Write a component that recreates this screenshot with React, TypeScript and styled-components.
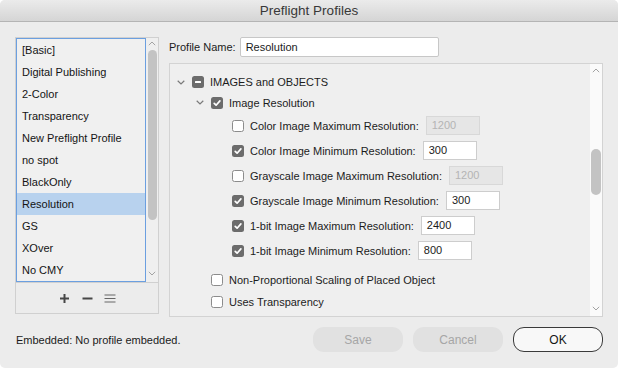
import React from "react";
import styled, { createGlobalStyle } from "styled-components";

const GlobalStyle = createGlobalStyle`
  html, body {
    margin: 0;
    padding: 0;
    background: #ffffff;
  }
  body {
    font-family: "Liberation Sans", Arial, sans-serif;
    font-size: 11px;
    color: #1b1b1b;
  }
  * {
    box-sizing: border-box;
  }
`;

const profiles = [
  "[Basic]",
  "Digital Publishing",
  "2-Color",
  "Transparency",
  "New Preflight Profile",
  "no spot",
  "BlackOnly",
  "Resolution",
  "GS",
  "XOver",
  "No CMY",
];

const resolutionRows = [
  { label: "Color Image Maximum Resolution:", checked: false, value: "1200" },
  { label: "Color Image Minimum Resolution:", checked: true, value: "300" },
  { label: "Grayscale Image Maximum Resolution:", checked: false, value: "1200" },
  { label: "Grayscale Image Minimum Resolution:", checked: true, value: "300" },
  { label: "1-bit Image Maximum Resolution:", checked: true, value: "2400" },
  { label: "1-bit Image Minimum Resolution:", checked: true, value: "800" },
];

type CheckState = "on" | "off" | "mixed";

const CheckBox: React.FC<{ state: CheckState }> = ({ state }) => (
  <Check $state={state}>
    {state === "on" && (
      <svg width="12" height="12" viewBox="0 0 12 12">
        <path
          d="M3.2 6.3 L5.1 8.2 L8.9 3.9"
          fill="none"
          stroke="#ffffff"
          strokeWidth="1.7"
          strokeLinecap="round"
          strokeLinejoin="round"
        />
      </svg>
    )}
    {state === "mixed" && (
      <svg width="12" height="12" viewBox="0 0 12 12">
        <rect x="3" y="5" width="6" height="2" rx="0.6" fill="#ffffff" />
      </svg>
    )}
  </Check>
);

const Disclosure: React.FC = () => (
  <ChevronBox>
    <svg width="8" height="5" viewBox="0 0 8 5">
      <path d="M0.7 0.8 L4 4 L7.3 0.8" fill="none" stroke="#7a7a7a" strokeWidth="1.2" />
    </svg>
  </ChevronBox>
);

const ScrollArrow: React.FC<{ down?: boolean }> = ({ down }) => (
  <svg width="8" height="5" viewBox="0 0 8 5">
    <path
      d={down ? "M0.8 0.8 L4 4 L7.2 0.8" : "M0.8 4.2 L4 1 L7.2 4.2"}
      fill="none"
      stroke="#a3a3a3"
      strokeWidth="1"
    />
  </svg>
);

const Scroller: React.FC<{
  thumbTop: number;
  thumbHeight: number;
  thumbWidth: number;
  arrowBox: number;
  bottomPad: number;
  light?: boolean;
}> = ({ thumbTop, thumbHeight, thumbWidth, arrowBox, bottomPad, light }) => (
  <Track $light={light}>
    <ArrowBox $h={arrowBox}>
      <ScrollArrow />
    </ArrowBox>
    <Thumb $top={thumbTop} $h={thumbHeight} $w={thumbWidth} />
    <TrackSpacer />
    <ArrowBox $h={arrowBox} style={{ marginBottom: bottomPad }}>
      <ScrollArrow down />
    </ArrowBox>
  </Track>
);

export default function App() {
  return (
    <>
      <GlobalStyle />
      <Window>
        <TitleBar>Preflight Profiles</TitleBar>
        <Body>
          <ListFrame>
            <ListRow>
              <ProfileList>
                {profiles.map((p) => (
                  <ProfileItem key={p} $selected={p === "Resolution"}>
                    {p}
                  </ProfileItem>
                ))}
              </ProfileList>
              <Scroller thumbTop={2} thumbHeight={170} thumbWidth={9} arrowBox={10} bottomPad={4} />
            </ListRow>
            <ListToolbar>
              <ToolIcon>
                <svg width="11" height="11" viewBox="0 0 11 11">
                  <path d="M5.5 1 V10 M1 5.5 H10" stroke="#474747" strokeWidth="2" />
                </svg>
              </ToolIcon>
              <ToolIcon>
                <svg width="11" height="11" viewBox="0 0 11 11">
                  <path d="M0.5 5.5 H10.5" stroke="#474747" strokeWidth="2" />
                </svg>
              </ToolIcon>
              <ToolIcon>
                <svg width="12" height="9" viewBox="0 0 12 9">
                  <path d="M0.5 1 H11.5 M0.5 4.5 H11.5 M0.5 8 H11.5" stroke="#666666" strokeWidth="1" />
                </svg>
              </ToolIcon>
            </ListToolbar>
          </ListFrame>

          <RightColumn>
            <NameRow>
              <span>Profile Name:</span>
              <NameInput readOnly value="Resolution" />
            </NameRow>
            <Panel>
              <Tree>
                <TreeRow $indent={4} $h={20}>
                  <Disclosure />
                  <CheckBox state="mixed" />
                  <RowLabel>IMAGES and OBJECTS</RowLabel>
                </TreeRow>
                <TreeRow $indent={23} $h={21}>
                  <Disclosure />
                  <CheckBox state="on" />
                  <RowLabel>Image Resolution</RowLabel>
                </TreeRow>
                {resolutionRows.map((r) => (
                  <TreeRow key={r.label} $indent={62} $h={25}>
                    <CheckBox state={r.checked ? "on" : "off"} />
                    <RowLabel>{r.label}</RowLabel>
                    <ValueBox $disabled={!r.checked}>{r.value}</ValueBox>
                  </TreeRow>
                ))}
                <TreeRow $indent={41} $h={22} $gap={6}>
                  <CheckBox state="off" />
                  <RowLabel>Non-Proportional Scaling of Placed Object</RowLabel>
                </TreeRow>
                <TreeRow $indent={41} $h={22}>
                  <CheckBox state="off" />
                  <RowLabel>Uses Transparency</RowLabel>
                </TreeRow>
              </Tree>
              <Scroller thumbTop={73} thumbHeight={46} thumbWidth={10} arrowBox={12} bottomPad={2} light />
            </Panel>
          </RightColumn>
        </Body>
        <Footer>
          <FooterNote>Embedded: No profile embedded.</FooterNote>
          <Buttons>
            <DialogButton $variant="disabled">Save</DialogButton>
            <DialogButton $variant="disabled">Cancel</DialogButton>
            <DialogButton $variant="default">OK</DialogButton>
          </Buttons>
        </Footer>
      </Window>
    </>
  );
}

const Window = styled.div`
  width: 618px;
  height: 368px;
  background: #ececec;
  border-radius: 5px;
  overflow: hidden;
  display: flex;
  flex-direction: column;
`;

const TitleBar = styled.div`
  height: 22px;
  flex-shrink: 0;
  display: flex;
  align-items: center;
  justify-content: center;
  background: linear-gradient(#ebebeb, #d5d5d5);
  border-bottom: 1px solid #b4b4b4;
  font-size: 13.5px;
  color: #383838;
`;

const Body = styled.div`
  display: grid;
  grid-template-columns: 144px 434px;
  column-gap: 10px;
  padding: 15px 15px 0;
`;

const ListFrame = styled.div`
  height: 277px;
  border: 1px solid #d0d0d0;
  display: flex;
  flex-direction: column;
`;

const ListRow = styled.div`
  display: flex;
  height: 244px;
`;

const ProfileList = styled.div`
  width: 130px;
  border: 1px solid #6b9fe0;
  background: #f0f0f0;
`;

const ProfileItem = styled.div<{ $selected?: boolean }>`
  height: 22px;
  line-height: 22px;
  padding-left: 5px;
  color: #141414;
  background: ${(p) => (p.$selected ? "#b8d2ee" : "transparent")};
  white-space: nowrap;
`;

const Track = styled.div<{ $light?: boolean }>`
  width: 12px;
  display: flex;
  flex-direction: column;
  align-items: center;
  background: ${(p) => (p.$light ? "#fafafa" : "#efefef")};
`;

const ArrowBox = styled.div<{ $h: number }>`
  height: ${(p) => p.$h}px;
  display: flex;
  align-items: center;
  justify-content: center;
`;

const Thumb = styled.div<{ $top: number; $h: number; $w: number }>`
  margin-top: ${(p) => p.$top}px;
  height: ${(p) => p.$h}px;
  width: ${(p) => p.$w}px;
  border-radius: 5px;
  background: #c3c3c3;
`;

const TrackSpacer = styled.div`
  flex: 1;
`;

const ListToolbar = styled.div`
  flex: 1;
  border-top: 1px solid #d0d0d0;
  display: flex;
  align-items: center;
  justify-content: center;
  gap: 7px;
`;

const ToolIcon = styled.div`
  width: 16px;
  height: 16px;
  display: flex;
  align-items: center;
  justify-content: center;
`;

const RightColumn = styled.div`
  display: flex;
  flex-direction: column;
`;

const NameRow = styled.div`
  display: flex;
  align-items: center;
  gap: 4px;
  height: 20px;
  margin-bottom: 6px;
`;

const NameInput = styled.input`
  width: 199px;
  height: 20px;
  border: 1px solid #c7c7c7;
  border-radius: 2px;
  background: #ffffff;
  padding: 0 5px;
  font-family: inherit;
  font-size: 11px;
  color: #1b1b1b;
  outline: none;
`;

const Panel = styled.div`
  height: 254px;
  border: 1px solid #d3d3d3;
  background: #efefef;
  display: flex;
`;

const Tree = styled.div`
  flex: 1;
  padding-top: 8px;
  display: flex;
  flex-direction: column;
`;

const TreeRow = styled.div<{ $indent: number; $h: number; $gap?: number }>`
  display: flex;
  align-items: center;
  height: ${(p) => p.$h}px;
  padding-left: ${(p) => p.$indent}px;
  margin-top: ${(p) => p.$gap ?? 0}px;
`;

const ChevronBox = styled.div`
  width: 14px;
  margin-right: 4px;
  display: flex;
  align-items: center;
  justify-content: center;
`;

const Check = styled.div<{ $state: CheckState }>`
  width: 12px;
  height: 12px;
  border-radius: 2.5px;
  flex-shrink: 0;
  display: flex;
  align-items: center;
  justify-content: center;
  background: ${(p) => (p.$state === "off" ? "#ffffff" : "#6c6c6c")};
  border: ${(p) => (p.$state === "off" ? "1px solid #8c8c8c" : "none")};
`;

const RowLabel = styled.span`
  margin-left: 6px;
  white-space: nowrap;
  color: #1c1c1c;
`;

const ValueBox = styled.div<{ $disabled?: boolean }>`
  margin-left: 7px;
  width: 54px;
  height: 19px;
  line-height: 17px;
  padding: 0 5px;
  border: 1px solid ${(p) => (p.$disabled ? "#d8d8d8" : "#cdcdcd")};
  background: ${(p) => (p.$disabled ? "#e6e6e6" : "#ffffff")};
  color: ${(p) => (p.$disabled ? "#b4b4b4" : "#1b1b1b")};
`;

const Footer = styled.div`
  display: flex;
  align-items: center;
  height: 25px;
  margin-top: 10px;
  padding: 0 15px 0 16px;
`;

const FooterNote = styled.div`
  flex: 1;
  color: #1b1b1b;
`;

const Buttons = styled.div`
  display: flex;
  gap: 10px;
`;

const DialogButton = styled.div<{ $variant: "disabled" | "default" }>`
  width: 90px;
  height: 25px;
  border-radius: 11px;
  display: flex;
  align-items: center;
  justify-content: center;
  font-size: 12px;
  background: ${(p) => (p.$variant === "disabled" ? "#e1e1e1" : "#f8f8f8")};
  color: ${(p) => (p.$variant === "disabled" ? "#a6a6a6" : "#151515")};
  border: ${(p) => (p.$variant === "disabled" ? "none" : "1.5px solid #3a3a3a")};
`;
